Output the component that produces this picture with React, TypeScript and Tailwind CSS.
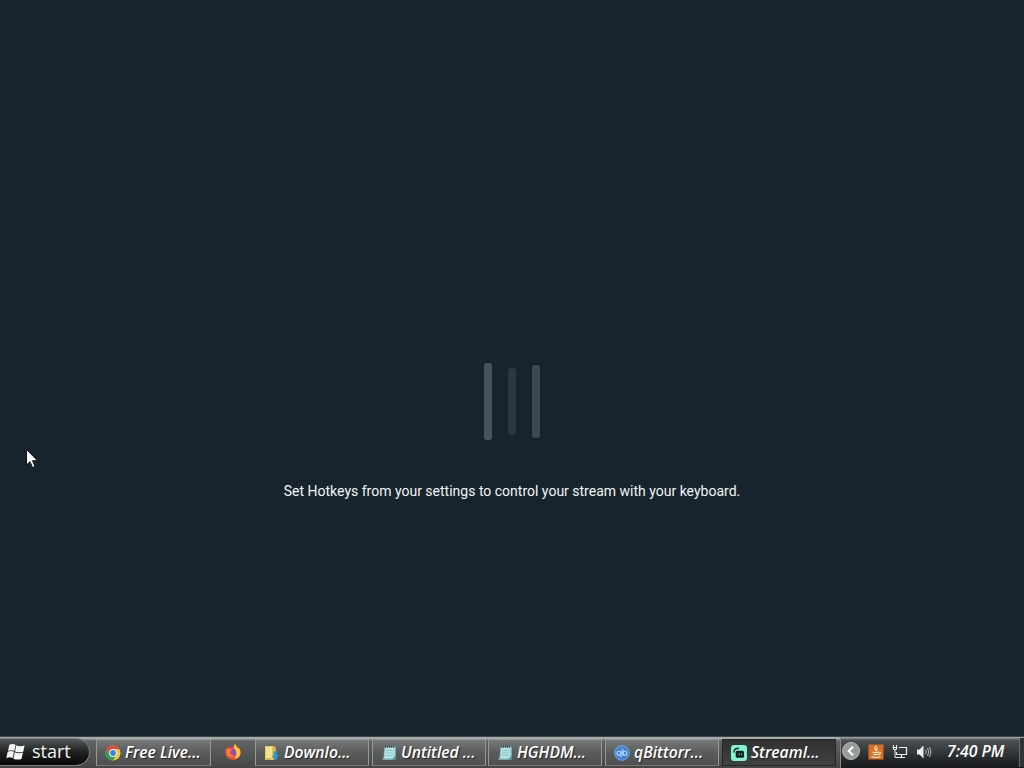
import type { ReactNode } from "react";
import clsx from "clsx";

const WindowsLogo = () => (
  <svg width="20" height="18" viewBox="0 0 20 18" fill="#f4f6f6">
    <path d="M3.400 1.700Q6.600.200 9.600 1.700L8.300 7.900Q5.200 6.600 2 7.900Z" />
    <path d="M10.300 2.200Q13.500 4 18.600 2.500L17.200 8.700Q13 10.100 9 8.500Z" />
    <path d="M1.700 8.700Q5 7.400 8 8.700L6.700 15Q3.500 13.700.300 15.100Z" />
    <path d="M8.700 9.300Q12.800 10.900 16.900 9.600L15.500 15.900Q11.500 17.400 7.400 15.700Z" />
  </svg>
);

const ChromeIcon = () => (
  <svg width="16" height="16" viewBox="0 0 16 16">
    <circle cx="8" cy="8" r="7.500" fill="#f2c63b" />
    <path d="M1.500 4.250A7.500 7.500 0 0 1 14.500 4.250H8L4.750 9.900Z" fill="#df4b3c" />
    <path d="M1.500 4.250A7.500 7.500 0 0 0 8 15.500L11.250 9.900L8 11.700L4.750 9.900Z" fill="#2fa052" />
    <circle cx="8" cy="8" r="3.900" fill="#f5f7f7" />
    <circle cx="8" cy="8" r="2.900" fill="#3f7fe0" />
  </svg>
);

const FirefoxIcon = () => (
  <svg width="18" height="18" viewBox="0 0 18 18">
    <path d="M2.300 4.300L3.600 5.700L5 3.200L6.300 5Q8 3.800 9 3.900L10.700 1L13 3.700L14.500 4.500Q17.500 8 16.400 11.500Q14.500 16.700 9 16.800Q2.500 16.500 1.300 10.500Q1 7 2.300 4.300Z" fill="#f0503c" />
    <path d="M10.700 1Q13 2.500 13.300 5L15 5Q17.800 9.500 15.500 13Q13 16 10 15.500Q14 12 11.500 7.500Q9.500 5 10.700 1Z" fill="#ffc93c" />
    <circle cx="8.600" cy="9.500" r="3.400" fill="#914bba" />
    <path d="M3 6Q6 5.600 8.600 7.400Q6.500 7.500 6 9Q6 12.400 10 12.500Q7.500 15 4 12.500Q1.800 10 3 6Z" fill="#f98330" />
  </svg>
);

const FolderIcon = () => (
  <svg width="16" height="16" viewBox="0 0 16 16">
    <path d="M1 1H9L11 2V14L9 15H1Z" fill="#e8cc62" />
    <path d="M2 2H8V13H2Z" fill="#f7e28c" />
    <path d="M8.700 1.500L12 2.500V13L8.700 15Z" fill="#d5b24d" />
    <path d="M9.500 6.500H13V10H15L11.500 15.200L7.500 11H9.500Z" fill="#269bd5" />
    <path d="M2 14H7" stroke="#b99a3b" />
  </svg>
);

const NotepadIcon = () => (
  <svg width="16" height="16" viewBox="0 0 16 16">
    <path d="M3.500 1.500H15V15H1.200L2.500 12Z" fill="#79adb1" />
    <path d="M4 2.500H13.700V13.500H3.200Z" fill="#b7e4e3" />
    <path d="M5 5.500H12.500M4.800 8H12.300M4.500 10.500H12" stroke="#7fbebf" strokeWidth=".8" />
    <path d="M4 1.700H14" stroke="#34484a" strokeWidth="2" strokeDasharray="1 1" />
    <path d="M11 15L15 10V15Z" fill="#4e969f" />
  </svg>
);

const TorrentIcon = () => (
  <svg width="16" height="16" viewBox="0 0 16 16">
    <circle cx="8" cy="8" r="7.300" fill="#4482d2" stroke="#74a9ea" />
    <g fill="none" stroke="#b5d8fc" strokeWidth="1.100">
      <circle cx="5" cy="8.300" r="2" />
      <circle cx="10.800" cy="8.300" r="2" />
      <path d="M7 6V12.300M8.800 3.700V10.300" />
    </g>
  </svg>
);

const StreamlabsIcon = () => (
  <svg width="16" height="16" viewBox="0 0 16 16">
    <rect width="16" height="16" rx="3" fill="#80f5d2" />
    <path d="M3 7Q3.300 3.200 7.500 3.200" fill="none" stroke="#17302e" strokeWidth="1.500" strokeLinecap="round" />
    <rect x="4.700" y="5.700" width="8.300" height="7" rx="1.500" fill="#10201f" />
    <path d="M8.200 8.300V10.300M10.700 8.300V10.300" stroke="#63c9b0" strokeWidth="1" />
  </svg>
);

const JavaIcon = () => (
  <svg width="16" height="16" viewBox="0 0 16 16">
    <rect x=".5" y=".5" width="15" height="15" fill="#d97025" />
    <g fill="none" stroke="#fff0d8" strokeWidth="1.100">
      <path d="M8.500 2Q5.500 4 8 6.500M10 4Q7.500 5.500 9 7.500M4.500 8Q7.500 9.300 11 8M5.200 10.200Q8 11 10.500 10.200M3.500 12.500Q8 14.500 12.500 12.500M11.500 8Q13.500 9 11 10.700" />
    </g>
  </svg>
);

const NetworkIcon = () => (
  <svg width="16" height="16" viewBox="0 0 16 16" fill="none" stroke="#edefef">
    <path d="M7 3.500H14.500V10.500H4.500V8" strokeWidth="1.200" />
    <path d="M9.500 10.500V13M5 13.500H13" strokeWidth="1.200" />
    <path d="M1.500 1V3M4.500 1V3M.500 3.500H5.500M1.500 4V5.500H4.500V4M3 5.500V13.500H5" />
  </svg>
);

const SpeakerIcon = () => (
  <svg width="16" height="16" viewBox="0 0 16 16">
    <path d="M1 5.500H3.500L7.500 1.500V14.500L3.500 10.500H1Z" fill="#ececec" />
    <path d="M9.500 5.800Q11 8 9.500 10.200M11.500 4Q14 8 11.500 12M13.500 3Q16.500 8 13.500 13" fill="none" stroke="#c9cccc" strokeWidth=".9" />
  </svg>
);

type TaskProps = {
  icon: ReactNode;
  label: string;
  active?: boolean;
  className?: string;
};

const TaskButton = ({ icon, label, active, className }: TaskProps) => (
  <button
    className={clsx(
      "flex h-[27px] shrink-0 items-center gap-1 border pl-2 text-[15.7px] leading-none font-semibold italic text-white",
      active
        ? "border-[#272727] bg-linear-to-b from-[#303030] to-[#424242]"
        : "border-[#979999] border-b-[#777] bg-linear-to-b from-[#777979] via-[#5b5c5c] to-[#4f4f4f]",
      className,
    )}
  >
    <span className="shrink-0">{icon}</span>
    <span className="whitespace-nowrap [text-shadow:1px_1px_1px_#222]">{label}</span>
  </button>
);

const Taskbar = () => (
  <footer className="flex h-8 shrink-0 items-start border-t border-[#3c4549] bg-linear-to-b from-[#a5aaab] from-5% via-[#626464] via-12% to-[#454545] font-['Open_Sans','Noto_Sans',sans-serif]">
    <button className="mt-px flex h-[28px] w-[90px] shrink-0 items-center gap-[5px] rounded-r-[14px] border border-l-0 border-[#777b7b] bg-linear-to-b from-[#555858] via-[#202222] via-50% to-[#060707] pl-[6px] text-[18px] text-[#f0f2f2]">
      <WindowsLogo />
      <span className="pb-[3px] pl-px leading-none">start</span>
    </button>
    <div className="ml-[6px] flex pt-[2px]">
      <TaskButton className="w-[115px]" icon={<ChromeIcon />} label="Free Live..." />
      <div className="flex h-[26px] w-[44px] items-center justify-center">
        <FirefoxIcon />
      </div>
      <TaskButton className="w-[114px]" icon={<FolderIcon />} label="Downlo..." />
      <TaskButton className="ml-[3px] w-[114px]" icon={<NotepadIcon />} label="Untitled ..." />
      <TaskButton className="ml-[2px] w-[114px]" icon={<NotepadIcon />} label="HGHDM..." />
      <TaskButton className="ml-[3px] w-[114px]" icon={<TorrentIcon />} label="qBittorr..." />
      <TaskButton className="ml-[3px] w-[114px]" icon={<StreamlabsIcon />} label="Streaml..." active />
    </div>
    <div className="ml-1 flex h-[31px] flex-1 items-center border-l border-[#858989] bg-linear-to-b from-[#989d9f] from-2% via-[#4b5053] via-10% to-[#17191b] pb-px">
      <svg className="shrink-0" width="20" height="20" viewBox="0 0 20 20">
        <circle cx="10" cy="9" r="8.500" fill="#999b9b" stroke="#b8baba" />
        <path d="M12 4.700L7.700 9L12 13.300" fill="none" stroke="white" strokeWidth="2" />
      </svg>
      <div className="ml-[7px] flex items-center gap-2">
        <JavaIcon />
        <NetworkIcon />
        <SpeakerIcon />
      </div>
      <span className="ml-[15px] whitespace-nowrap text-[15.8px] font-semibold italic text-white">7:40 PM</span>
      <div className="ml-auto h-[29px] w-[5px] border-l border-[#686c6e] bg-[#303437]" />
    </div>
  </footer>
);

export default function App() {
  return (
    <div className="relative flex h-[768px] w-[1024px] flex-col overflow-hidden bg-[#17242d]">
      <main className="flex flex-1 flex-col items-center pt-[363px]">
        <div className="flex h-[77px] items-center gap-4">
          <div className="h-[77px] w-2 rounded-[3px] bg-[#46535b]" />
          <div className="h-[67px] w-2 rounded-[3px] bg-[#2d3941]" />
          <div className="h-[73px] w-2 rounded-[3px] bg-[#3d4951]" />
        </div>
        <p className="mt-[41px] font-[Roboto,sans-serif] text-sm text-[#f3f5f5]">
          Set Hotkeys from your settings to control your stream with your keyboard.
        </p>
      </main>
      <Taskbar />
      <svg className="absolute left-[26px] top-[449px]" width="13" height="20" viewBox="0 0 13 20">
        <path d="M.500.500V16L4 12.700L6.500 18.500L9 17.500L6.500 11.700H11.500Z" fill="white" stroke="#0b1217" />
      </svg>
    </div>
  );
}
